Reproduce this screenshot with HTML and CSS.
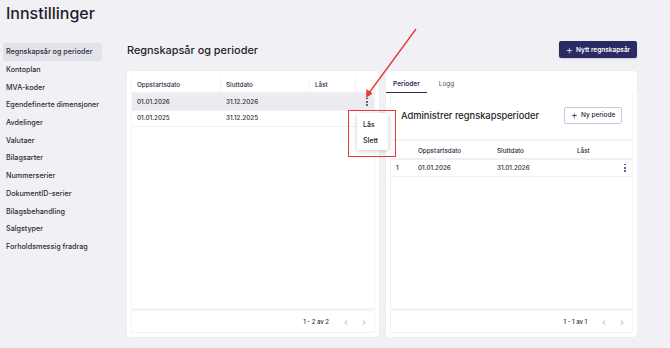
FILE: index.html
```html
<!DOCTYPE html>
<html lang="no">
<head>
<meta charset="utf-8">
<title>Innstillinger</title>
<link rel="stylesheet" href="styles.css">
</head>
<body>
<h1 class="page-title">Innstillinger</h1>
<div class="layout">
  <nav class="sidebar">
    <a class="nav-item active">Regnskapsår og perioder</a>
    <a class="nav-item">Kontoplan</a>
    <a class="nav-item">MVA-koder</a>
    <a class="nav-item">Egendefinerte dimensjoner</a>
    <a class="nav-item">Avdelinger</a>
    <a class="nav-item">Valutaer</a>
    <a class="nav-item">Bilagsarter</a>
    <a class="nav-item">Nummerserier</a>
    <a class="nav-item">DokumentID-serier</a>
    <a class="nav-item">Bilagsbehandling</a>
    <a class="nav-item">Salgstyper</a>
    <a class="nav-item">Forholdsmessig fradrag</a>
  </nav>
  <main class="main">
    <div class="main-head">
      <h2 class="main-title">Regnskapsår og perioder</h2>
      <button class="btn-primary"><span class="plus">+</span>Nytt regnskapsår</button>
    </div>
    <div class="cards">
      <section class="card card-left">
        <div class="inner">
          <div class="table-wrap">
            <div class="row head cols-left">
              <div class="cell">Oppstartsdato</div>
              <div class="cell">Sluttdato</div>
              <div class="cell">Låst</div>
              <div class="cell"></div>
            </div>
            <div class="row cols-left selected">
              <div class="cell">01.01.2026</div>
              <div class="cell">31.12.2026</div>
              <div class="cell"></div>
              <div class="cell kebab-cell"><span class="kebab"><i></i><i></i><i></i></span></div>
            </div>
            <div class="row cols-left">
              <div class="cell">01.01.2025</div>
              <div class="cell">31.12.2025</div>
              <div class="cell"></div>
              <div class="cell"></div>
            </div>
          </div>
          <div class="pager">
            <span class="pager-text">1 - 2 av 2</span>
            <span class="pager-arrow">&#8249;</span>
            <span class="pager-arrow">&#8250;</span>
          </div>
        </div>
      </section>
      <section class="card card-right">
        <div class="tabs">
          <span class="tab active">Perioder</span>
          <span class="tab">Logg</span>
        </div>
        <div class="inner">
          <div class="sub-head">
            <h3 class="sub-title">Administrer regnskapsperioder</h3>
            <button class="btn-outline"><span class="plus">+</span>Ny periode</button>
          </div>
          <div class="table-wrap right-table">
            <div class="row head cols-right">
              <div class="cell"></div>
              <div class="cell">Oppstartsdato</div>
              <div class="cell">Sluttdato</div>
              <div class="cell">Låst</div>
              <div class="cell"></div>
            </div>
            <div class="row cols-right">
              <div class="cell">1</div>
              <div class="cell">01.01.2026</div>
              <div class="cell">31.01.2026</div>
              <div class="cell"></div>
              <div class="cell kebab-cell kebab-right"><span class="kebab"><i></i><i></i><i></i></span></div>
            </div>
          </div>
          <div class="pager">
            <span class="pager-text">1 - 1 av 1</span>
            <span class="pager-arrow">&#8249;</span>
            <span class="pager-arrow">&#8250;</span>
          </div>
        </div>
      </section>
    </div>
  </main>
</div>

<div class="menu">
  <div class="menu-item">Lås</div>
  <div class="menu-item">Slett</div>
</div>
<div class="highlight"></div>
<svg class="arrow" width="670" height="348" viewBox="0 0 670 348">
  <line x1="416" y1="29" x2="369" y2="93" stroke="#e53935" stroke-width="1.3"/>
  <polygon points="366,98 366.5,89 372.5,93.5" fill="#e53935"/>
</svg>
</body>
</html>
```

FILE: styles.css
```css
* { box-sizing: border-box; }
html, body { margin: 0; padding: 0; }
body {
  width: 670px;
  height: 348px;
  overflow: hidden;
  background: #f1f1f5;
  font-family: Inter, "Noto Sans", sans-serif;
  color: #2a2a3a;
  position: relative;
}
.page-title {
  margin: 0;
  padding: 3px 0 0 6px;
  height: 43px;
  font-size: 16px;
  line-height: 20px;
  font-weight: 500;
  color: #1e1e2c;
}
.layout {
  display: flex;
  padding-left: 3px;
}
.sidebar {
  width: 99px;
  display: flex;
  flex-direction: column;
  margin-right: 25px;
}
.nav-item {
  height: 17.7px;
  display: flex;
  align-items: center;
  padding-left: 3px;
  font-size: 7.2px;
  font-weight: 500;
  color: #2a2a3a;
  border-radius: 2px;
  white-space: nowrap;
}
.nav-item.active { background: #e3e3ea; }
.main { width: 510px; display: flex; flex-direction: column; }
.main-head {
  height: 29px;
  display: flex;
  align-items: flex-start;
  justify-content: space-between;
  margin-top: -1px;
}
.main-title {
  margin: 0;
  font-size: 10.9px;
  font-weight: 500;
  color: #1e1e2c;
  line-height: 16px;
  padding-top: 0px;
}
.btn-primary {
  height: 17px;
  width: 78px;
  background: #2b2a63;
  color: #fff;
  border: none;
  border-radius: 2px;
  font-family: inherit;
  font-size: 6.5px;
  font-weight: 600;
  display: flex;
  align-items: center;
  justify-content: center;
  gap: 3px;
  padding: 0;
  margin-top: -1px;
  box-shadow: 0 1px 2px rgba(0,0,0,0.15);
}
.plus { font-size: 11px; font-weight: 300; line-height: 10px; }
.cards {
  display: grid;
  grid-template-columns: 252px 251px;
  column-gap: 7px;
}
.card {
  height: 266px;
  background: #fff;
  border-radius: 3px;
  box-shadow: 0 0 1px rgba(0,0,0,0.08);
  padding: 6px 4px 4px 4px;
  display: flex;
  flex-direction: column;
}
.card-right { padding-top: 0; }
.inner {
  flex: 1;
  display: flex;
  flex-direction: column;
  border-left: 1px solid #f4f4f7;
  border-right: 1px solid #f4f4f7;
  border-bottom: 1px solid #f4f4f7;
}
.table-wrap { flex: 1; }
.row {
  display: grid;
  height: 16.5px;
  align-items: center;
  font-size: 6.3px;
  font-weight: 500;
  color: #2a2a3a;
  border-bottom: 1px solid #f0f0f4;
}
.row.head { height: 17px; border-bottom: 2px solid #f0f0f4; }
.row.head .cell { border-right: 1px solid #f3f3f6; height: 100%; display: flex; align-items: center; }
.row.head .cell:last-child { border-right: none; }
.row.selected { background: #ececf0; }
.cols-left { grid-template-columns: 89px 89px 46px 1fr; }
.cell { padding-left: 5px; white-space: nowrap; }
.kebab-cell { display: flex; justify-content: flex-start; padding-left: 10px; }
.kebab-right { padding-left: 4px; }
.kebab { display: flex; flex-direction: column; gap: 1.4px; }
.kebab i { width: 1.8px; height: 1.8px; border-radius: 50%; background: #3a3975; display: block; }
.pager {
  height: 24px;
  border-top: 3px solid #f4f4f7;
  display: flex;
  align-items: center;
  justify-content: flex-end;
  padding-right: 1px;
  font-size: 6px;
  font-weight: 500;
  color: #2a2a3a;
}
.pager-text { margin-right: 8px; }
.pager-arrow { color: #c4c4ce; font-size: 10px; width: 18px; text-align: center; }
.tabs {
  height: 22px;
  display: flex;
  align-items: flex-start;
  font-size: 6.5px;
  margin-left: -4px;
}
.tab { padding: 9px 7px 0 7px; height: 22px; color: #555566; font-weight: 400; }
.tab.active {
  color: #2b2a63;
  font-weight: 600;
  border-bottom: 1.5px solid #2b2a63;
}
.tab + .tab { margin-left: 5px; }
.sub-head {
  height: 48px;
  display: flex;
  align-items: center;
  justify-content: space-between;
  padding: 0 10px 2px 10px;
  border-bottom: 2px solid #f4f4f7;
}
.sub-title { margin: 0; font-size: 9.3px; font-weight: 500; color: #1e1e2c; white-space: nowrap; }
.btn-outline {
  height: 17px;
  width: 58px;
  background: #fff;
  border: 1px solid #c9c9d6;
  border-radius: 2px;
  font-family: inherit;
  font-size: 6.5px;
  font-weight: 500;
  color: #2a2a3a;
  display: flex;
  align-items: center;
  justify-content: center;
  gap: 3px;
  padding: 0;
}
.btn-outline .plus { color: #2b2a63; }
.right-table { padding-top: 2px; }
.cols-right { grid-template-columns: 22px 79px 80px 48px 1fr; }
.right-table .row.head .cell { border-right: none; }
.menu {
  position: absolute;
  left: 357px;
  top: 113px;
  width: 31px;
  height: 37px;
  background: #fff;
  border-radius: 2px;
  box-shadow: 0 1px 4px rgba(0,0,0,0.22);
  display: flex;
  flex-direction: column;
  justify-content: center;
  padding-left: 6px;
  padding-top: 1px;
  gap: 7px;
  font-size: 7px;
  font-weight: 500;
  color: #222;
}
.highlight {
  position: absolute;
  left: 348px;
  top: 110px;
  width: 48px;
  height: 47px;
  border: 1.5px solid #e53935;
}
.arrow { position: absolute; left: 0; top: 0; pointer-events: none; }
```
